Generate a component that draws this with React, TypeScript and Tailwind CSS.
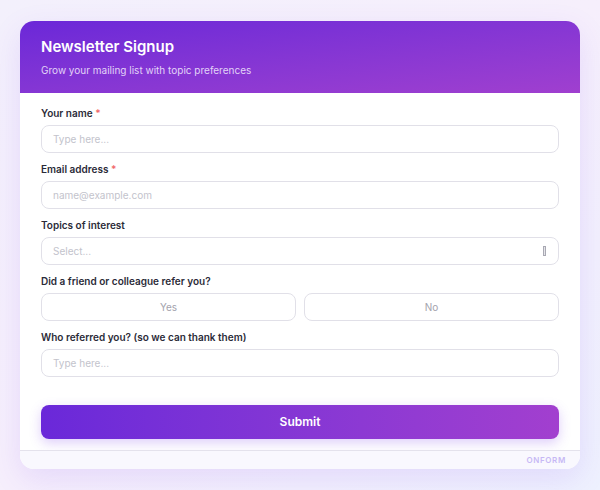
import React from "react";

function Label({ text, required }: { text: string; required?: boolean }) {
  return (
    <div className="text-[10px] leading-[14px] font-semibold text-[#2b2b38] mb-[5px]">
      {text}
      {required && <span className="text-[#f16a6a]"> *</span>}
    </div>
  );
}

function Input({ placeholder }: { placeholder: string }) {
  return (
    <div className="h-[28px] rounded-lg border-[1.5px] border-[#e1e0e8] bg-white flex items-center px-[11px] text-[10px] text-[#c3c3cc]">
      {placeholder}
    </div>
  );
}

export default function App() {
  return (
    <div
      className="w-[600px] h-[490px] bg-linear-to-br from-[#f3f0fc] via-[#f6effc] to-[#eef1fe] pt-[21px] pl-[20px]"
      style={{ fontFamily: "Inter, 'Noto Sans', sans-serif" }}
    >
      <div className="w-[560px] h-[448px] rounded-[14px] bg-white overflow-hidden flex flex-col shadow-[0_10px_30px_rgba(124,58,237,0.13)]">
        <div className="h-[72px] shrink-0 bg-linear-to-br from-[#6b27d8] to-[#a03fcf] px-[21px] pt-[16px]">
          <div className="text-[15px] leading-[20px] font-semibold text-white">Newsletter Signup</div>
          <div className="mt-[6px] text-[10px] leading-[14px] text-[#e2d3f7]">
            Grow your mailing list with topic preferences
          </div>
        </div>
        <div className="flex-1 px-[21px] pt-[13px] flex flex-col">
          <div className="flex flex-col gap-[9px]">
            <div>
              <Label text="Your name" required />
              <Input placeholder="Type here..." />
            </div>
            <div>
              <Label text="Email address" required />
              <Input placeholder="name@example.com" />
            </div>
            <div>
              <Label text="Topics of interest" />
              <div className="h-[28px] rounded-lg border-[1.5px] border-[#e1e0e8] bg-white flex items-center justify-between px-[11px] text-[10px] text-[#c3c3cc]">
                <span>Select...</span>
                <span className="w-[3px] h-[10px] border border-[#a9a9b3] bg-[#e5e5ea] mr-[1px]" />
              </div>
            </div>
            <div>
              <Label text="Did a friend or colleague refer you?" />
              <div className="grid grid-cols-2 gap-[8px]">
                <div className="h-[28px] rounded-lg border-[1.5px] border-[#e1e0e8] flex items-center justify-center text-[10px] text-[#a3a3ad]">
                  Yes
                </div>
                <div className="h-[28px] rounded-lg border-[1.5px] border-[#e1e0e8] flex items-center justify-center text-[10px] text-[#a3a3ad]">
                  No
                </div>
              </div>
            </div>
            <div>
              <Label text="Who referred you? (so we can thank them)" />
              <Input placeholder="Type here..." />
            </div>
          </div>
          <div className="mt-[28px] h-[34px] rounded-lg bg-linear-to-r from-[#6a28d9] to-[#a23fcf] flex items-center justify-center text-[12px] font-semibold text-white shadow-[0_4px_12px_rgba(124,58,237,0.25)]">
            Submit
          </div>
        </div>
        <div className="h-[19px] shrink-0 border-t border-[#e4e2ec] bg-[#f9f8fe] flex items-center justify-end pr-[14px]">
          <span className="text-[8px] font-semibold tracking-[0.08em] text-[#c7b8f5]">ONFORM</span>
        </div>
      </div>
    </div>
  );
}
